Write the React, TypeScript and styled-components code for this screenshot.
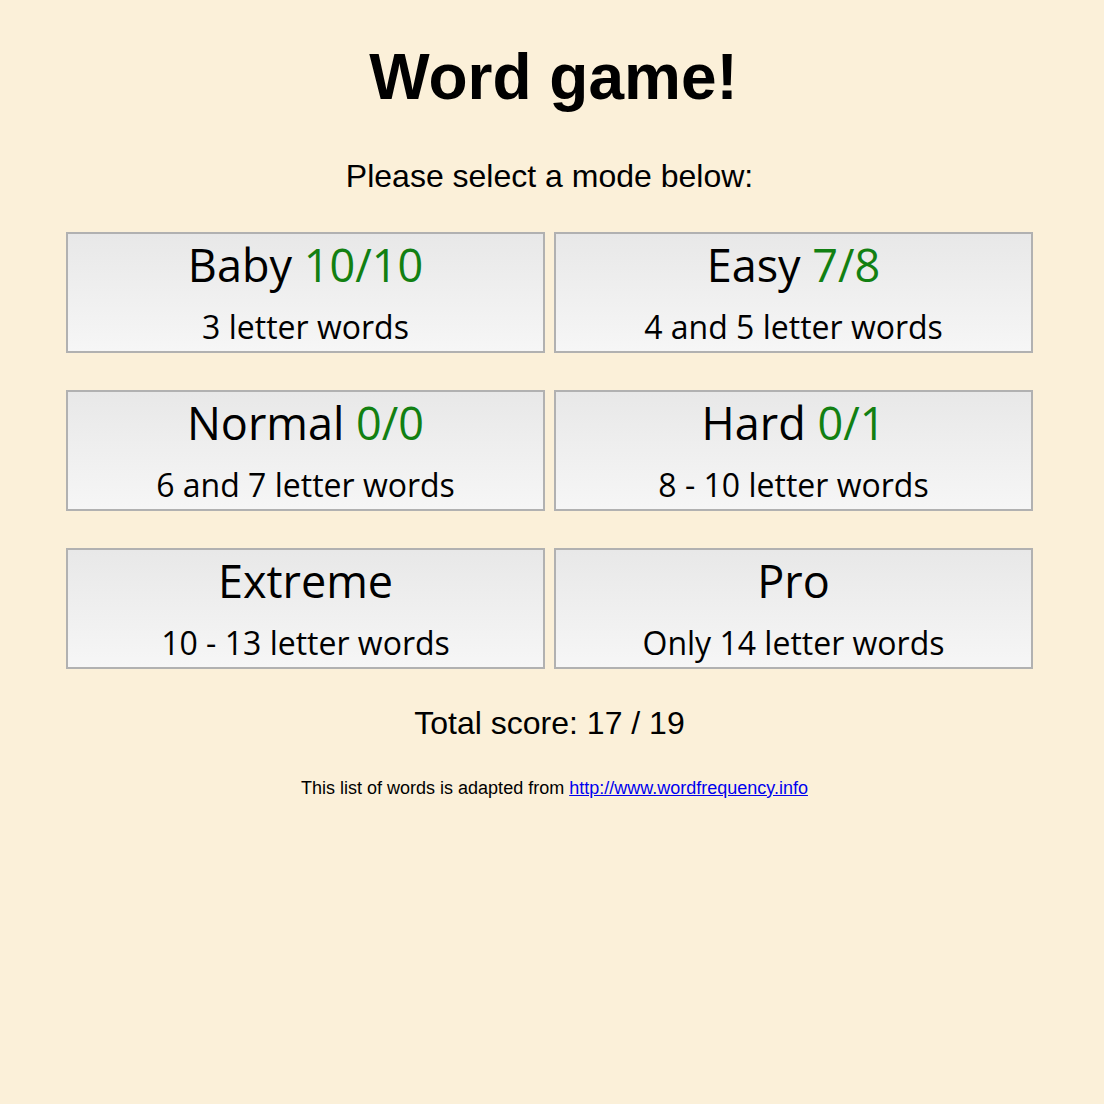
import React from "react";
import styled, { createGlobalStyle } from "styled-components";

const Global = createGlobalStyle`
  html, body { background: #fbf0d9; }
  body {
    margin: 8px;
    font-family: "Liberation Sans", Arial, sans-serif;
    color: #000;
  }
`;

const Page = styled.div`
  display: flex;
  flex-direction: column;
  align-items: center;
`;

const Title = styled.h1`
  margin: 32px 0 0 3px;
  font-size: 64px;
  font-weight: bold;
  line-height: 74px;
`;

const Prompt = styled.p`
  margin: 44px 5px 0 0;
  font-size: 32px;
  line-height: 37px;
`;

const Grid = styled.div`
  display: grid;
  grid-template-columns: 479px 479px;
  column-gap: 9px;
  row-gap: 37px;
  margin-top: 37px;
  margin-right: 5px;
`;

const ModeButton = styled.button`
  box-sizing: border-box;
  height: 121px;
  border: 2px solid #b1b1b1;
  background: linear-gradient(to bottom, #e8e8e8, #f6f6f6);
  display: flex;
  flex-direction: column;
  align-items: center;
  padding: 9px 0 0;
  font-family: "Open Sans", "Noto Sans", sans-serif;
  color: #000;
  cursor: pointer;
`;

const ModeName = styled.span`
  font-size: 45px;
  line-height: 44px;
`;

const Score = styled.span`
  color: #128012;
`;

const ModeDesc = styled.span`
  margin-top: 24px;
  font-size: 32px;
  line-height: 31px;
`;

const Total = styled.p`
  margin: 36px 5px 0 0;
  font-size: 32px;
  line-height: 37px;
`;

const Credit = styled.p`
  margin: 36px 0 0 5px;
  font-size: 18px;
  line-height: 21px;
`;

const Link = styled.a`
  color: #0000ee;
`;

const modes = [
  { name: "Baby", score: "10/10", desc: "3 letter words" },
  { name: "Easy", score: "7/8", desc: "4 and 5 letter words" },
  { name: "Normal", score: "0/0", desc: "6 and 7 letter words" },
  { name: "Hard", score: "0/1", desc: "8 - 10 letter words" },
  { name: "Extreme", score: "", desc: "10 - 13 letter words" },
  { name: "Pro", score: "", desc: "Only 14 letter words" },
];

export default function App() {
  return (
    <Page>
      <Global />
      <Title>Word game!</Title>
      <Prompt>Please select a mode below:</Prompt>
      <Grid>
        {modes.map((m) => (
          <ModeButton key={m.name}>
            <ModeName>
              {m.name}
              {m.score && <Score> {m.score}</Score>}
            </ModeName>
            <ModeDesc>{m.desc}</ModeDesc>
          </ModeButton>
        ))}
      </Grid>
      <Total>Total score: 17 / 19</Total>
      <Credit>
        This list of words is adapted from{" "}
        <Link href="#">http://www.wordfrequency.info</Link>
      </Credit>
    </Page>
  );
}
